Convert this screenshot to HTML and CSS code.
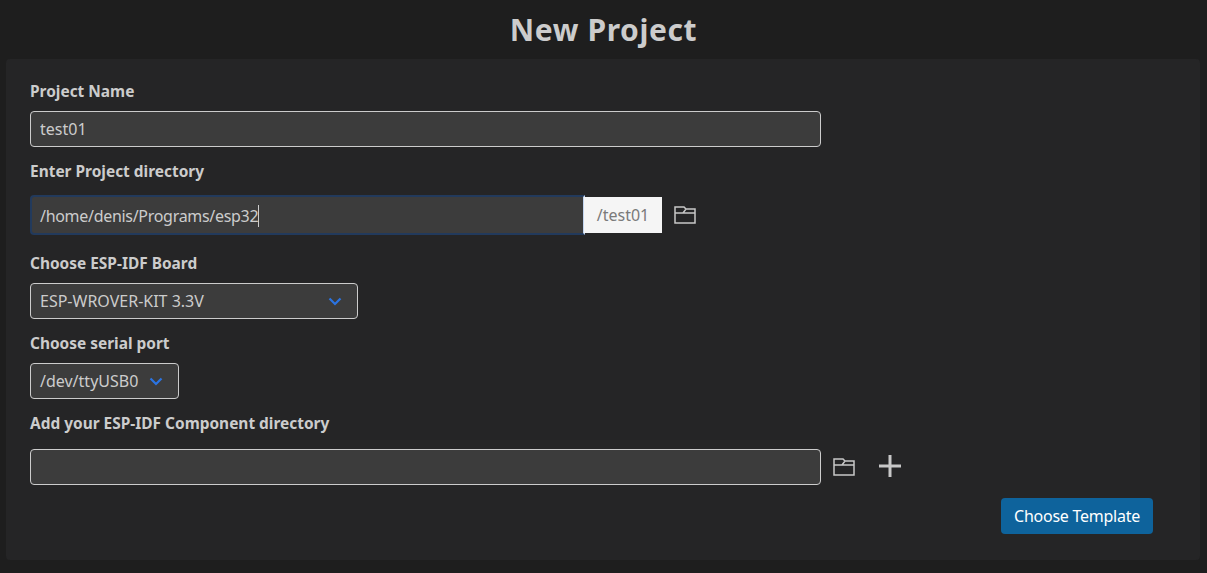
FILE: index.html
```html
<!DOCTYPE html>
<html lang="en">
<head>
    <meta charset="UTF-8">
    <meta name="viewport" content="width=device-width, initial-scale=1.0">
    <title>New Project</title>
    <link rel="stylesheet" href="styles.css">
</head>
<body>
    <h1 class="title">New Project</h1>
    <div class="panel">
        <div class="field">
            <label class="label">Project Name</label>
            <input class="input input-wide" type="text" value="test01">
        </div>
        <div class="field field-dir">
            <label class="label">Enter Project directory</label>
            <div class="row">
                <div class="input input-focus"><span class="caret">/home/denis/Programs/esp32</span></div>
                <span class="addon">/test01</span>
                <svg class="folder" width="22" height="18" viewBox="0 0 22 18">
                    <path d="M1 17V1h9l2 2h9v14z M1 7h8l3-4 M9 7h12" fill="none" stroke="#c8c8c8" stroke-width="1.500"/>
                </svg>
            </div>
        </div>
        <div class="field">
            <label class="label">Choose ESP-IDF Board</label>
            <div class="select select-board">
                <span>ESP-WROVER-KIT 3.3V</span>
                <svg class="chevron" width="14" height="9" viewBox="0 0 14 9"><path d="M1.500 1.500L7 7l5.500-5.500" fill="none" stroke="#2b74e2" stroke-width="2.200"/></svg>
            </div>
        </div>
        <div class="field">
            <label class="label">Choose serial port</label>
            <div class="select select-port">
                <span>/dev/ttyUSB0</span>
                <svg class="chevron" width="14" height="9" viewBox="0 0 14 9"><path d="M1.500 1.500L7 7l5.500-5.500" fill="none" stroke="#2b74e2" stroke-width="2.200"/></svg>
            </div>
        </div>
        <div class="field field-comp">
            <label class="label">Add your ESP-IDF Component directory</label>
            <div class="row">
                <input class="input input-wide" type="text" value="">
                <svg class="folder" width="22" height="18" viewBox="0 0 22 18">
                    <path d="M1 17V1h9l2 2h9v14z M1 7h8l3-4 M9 7h12" fill="none" stroke="#c8c8c8" stroke-width="1.500"/>
                </svg>
                <svg class="plus" width="22" height="22" viewBox="0 0 22 22">
                    <path d="M11 0v22M0 11h22" stroke="#c8c8c8" stroke-width="3"/>
                </svg>
            </div>
        </div>
        <div class="actions">
            <button class="button">Choose Template</button>
        </div>
    </div>
</body>
</html>
```
FILE: styles.css
```css
* {
    box-sizing: border-box;
}
body {
    margin: 0;
    background-color: #1e1e1e;
    color: #cccccc;
    font-family: "Noto Sans", "Open Sans", sans-serif;
    font-size: 16px;
}
.title {
    margin: 0;
    height: 59px;
    line-height: 60px;
    text-align: center;
    font-size: 30px;
    font-weight: 700;
    letter-spacing: 0.6px;
}
.panel {
    margin: 0 7px 13px 6px;
    padding: 20px 24px 26px;
    height: 501px;
    background-color: #252526;
    border-radius: 4px;
}
.field {
    margin-bottom: 12px;
}
.field-dir {
    margin-bottom: 16px;
}
.field-dir .label {
    margin-bottom: 12px;
}
.field-comp {
    margin-bottom: 13px;
}
.field-comp .label {
    margin-bottom: 14px;
}
.label {
    display: block;
    height: 24px;
    line-height: 24px;
    margin-bottom: 8px;
    font-size: 15.45px;
    font-weight: 700;
}
.input {
    height: 36px;
    padding: 0 9px;
    background-color: #3c3c3c;
    border: 1px solid #cccccc;
    border-radius: 4px;
    color: #cccccc;
    font-family: inherit;
    font-size: 16px;
    line-height: 34px;
    outline: none;
}
.input-wide {
    width: 791px;
}
.row {
    display: flex;
    align-items: center;
}
.input-focus {
    width: 555px;
    height: 40px;
    padding-left: 8px;
    line-height: 38px;
    letter-spacing: -0.3px;
    border: 2px solid #223a5c;
    border-right-color: #c3d5ef;
    border-radius: 4px 0 0 4px;
}
.caret {
    border-right: 1px solid #cccccc;
}
.addon {
    width: 78px;
    height: 36px;
    line-height: 36px;
    margin-left: -1px;
    text-align: center;
    background-color: #f5f5f5;
    color: #7a7a7a;
}
.folder {
    margin-left: 12px;
}
.plus {
    margin-left: 24px;
    margin-top: -2px;
}
.select {
    display: flex;
    align-items: center;
    justify-content: space-between;
    height: 36px;
    padding: 0 15px 0 9px;
    background-color: #3c3c3c;
    border: 1px solid #cccccc;
    border-radius: 4px;
}
.select-board {
    width: 328px;
}
.select-port {
    width: 149px;
}
.actions {
    display: flex;
    justify-content: flex-end;
    padding-right: 23px;
}
.button {
    width: 152px;
    height: 36px;
    background-color: #0e639c;
    border: none;
    border-radius: 4px;
    color: #ffffff;
    font-family: inherit;
    font-size: 16px;
    letter-spacing: -0.25px;
}
```
